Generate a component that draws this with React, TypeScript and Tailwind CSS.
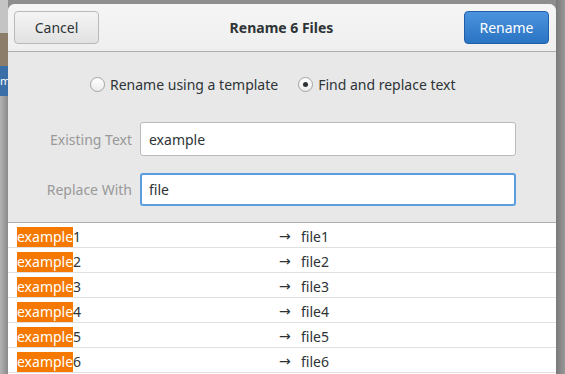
import React from "react";

const font = { fontFamily: '"Noto Sans", "Open Sans", sans-serif' };

function Radio({ checked }: { checked?: boolean }) {
  return (
    <span className="w-[15px] h-[15px] rounded-full border border-[#a3a3a3] bg-gradient-to-b from-[#ffffff] to-[#ececec] flex items-center justify-center shrink-0">
      {checked && <span className="w-[5px] h-[5px] rounded-full bg-[#2e3436]" />}
    </span>
  );
}

const rows = [1, 2, 3, 4, 5, 6];

export default function App() {
  return (
    <div className="w-[565px] h-[374px] flex overflow-hidden bg-[#8e8e8e]" style={font}>
      {/* left background strip */}
      <div className="w-[8px] flex flex-col shrink-0">
        <div className="h-[33px] bg-[#c4c4c4]" />
        <div className="h-[33px] bg-[#8b7d6a]" />
        <div className="h-[30px] bg-[#3b6fa8] text-[11px] leading-[30px] text-white overflow-hidden whitespace-nowrap">mp</div>
        <div className="flex-1 bg-gradient-to-r from-[#b4b4b4] to-[#8a8a8a]" />
      </div>

      {/* dialog */}
      <div className="w-[548px] mt-[4px] flex flex-col rounded-t-[7px] overflow-hidden bg-[#e8e8e8] shrink-0">
        {/* header */}
        <div className="h-[48px] shrink-0 bg-gradient-to-b from-[#f5f5f5] to-[#efefef] border-b border-[#adadad] flex items-center justify-between pl-[6px] pr-[7px]">
          <button className="w-[85px] h-[33px] rounded-[4px] border border-[#b9b9b9] bg-gradient-to-b from-[#f4f4f4] to-[#e2e2e2] text-[14px] text-[#2e3436]">
            Cancel
          </button>
          <div className="text-[14px] font-bold text-[#2e3436]">Rename 6 Files</div>
          <button className="w-[85px] h-[33px] rounded-[4px] border border-[#1f5fa8] bg-gradient-to-b from-[#4b93dd] to-[#2a74c4] text-[14px] text-white">
            Rename
          </button>
        </div>

        {/* radios */}
        <div className="h-[70px] shrink-0 flex items-start pl-[82px] pt-[22px] gap-[20px]">
          <label className="h-[20px] flex items-center gap-[5px] text-[14px] text-[#2e3436]">
            <Radio />
            Rename using a template
          </label>
          <label className="h-[20px] flex items-center gap-[5px] text-[14px] text-[#2e3436]">
            <Radio checked />
            Find and replace text
          </label>
        </div>

        {/* form */}
        <div className="flex flex-col gap-[17px] pl-[33px] pr-[40px] shrink-0">
          <div className="flex items-center gap-[8px]">
            <span className="w-[91px] text-right text-[14px] text-[#999999]">Existing Text</span>
            <div className="flex-1 h-[34px] rounded-[3px] border border-[#bababa] bg-white flex items-center px-[8px] text-[14px] text-[#2e3436]">
              example
            </div>
          </div>
          <div className="flex items-center gap-[8px]">
            <span className="w-[91px] text-right text-[14px] text-[#999999]">Replace With</span>
            <div className="flex-1 h-[33px] rounded-[3px] border-2 border-[#5c9ddf] bg-white flex items-center px-[7px] text-[14px] text-[#2e3436]">
              file
            </div>
          </div>
        </div>

        {/* list */}
        <div className="mt-[16px] flex-1 border-t border-[#b0b0b0] bg-white flex flex-col">
          {rows.map((n) => (
            <div key={n} className="h-[25px] shrink-0 flex items-end border-b border-[#e0e0e0] text-[14px] text-[#2e3436]">
              <div className="w-[271px] pl-[9px] flex items-center h-[21px]">
                <span className="bg-[#f57900] text-white h-[20px] leading-[20px]">example</span>
                <span>{n}</span>
              </div>
              <span className="w-[22px] h-[21px] leading-[21px] text-[14px]" style={{ fontFamily: '"DejaVu Sans", sans-serif' }}>→</span>
              <span className="h-[21px] leading-[21px]">file{n}</span>
            </div>
          ))}
        </div>
      </div>

      {/* right background strip */}
      <div className="flex-1 bg-gradient-to-r from-[#7a7a7a] to-[#979797]" />
    </div>
  );
}
